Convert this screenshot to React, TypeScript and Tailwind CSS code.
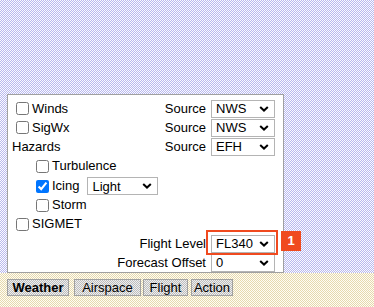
import { ReactNode } from 'react';

const Chevron = () => (
  <svg width="10" height="6" viewBox="0 0 10 6" className="shrink-0">
    <path d="M1.2 1 L5 4.6 L8.8 1" fill="none" stroke="#000" strokeWidth="2" />
  </svg>
);

const FakeSelect = ({ value, width = 'w-[64px]' }: { value: string; width?: string }) => (
  <div
    className={`${width} h-[18px] flex items-center justify-between border border-[#b4b4b4] bg-white pl-[4px] pr-[5px] leading-none`}
  >
    <span>{value}</span>
    <Chevron />
  </div>
);

const Check = ({ label, checked = false }: { label: string; checked?: boolean }) => (
  <label className="flex items-center">
    <input
      type="checkbox"
      defaultChecked={checked}
      className="w-[13px] h-[13px] ml-[4px] mr-[3px]"
    />
    <span>{label}</span>
  </label>
);

const SourceRow = ({ left, value, h = 'h-[19px]' }: { left: ReactNode; value: string; h?: string }) => (
  <div className={`${h} flex items-center justify-between`}>
    <div className="flex items-center">{left}</div>
    <div className="flex items-center gap-[5px]">
      <span>Source</span>
      <FakeSelect value={value} />
    </div>
  </div>
);

const tabs = [
  { name: 'Weather', w: 'w-[62px]', active: true },
  { name: 'Airspace', w: 'w-[67px] ml-[5px]' },
  { name: 'Flight', w: 'w-[45px] ml-[2px]' },
  { name: 'Action', w: 'w-[42px] ml-[3px]' },
];

export default function App() {
  return (
    <div className="w-[374px] h-[307px] overflow-hidden flex flex-col font-['Liberation_Sans',Arial,sans-serif] text-[13px] text-black">
      {/* map area */}
      <div className="h-[273px] bg-[#dcdcf6] bg-[image:repeating-conic-gradient(#b9b9ee_0%_25%,#fbfbff_0%_50%)] bg-[length:2px_2px] pt-[94px] pl-[7px]">
        <div className="relative w-[277px] h-[179px] border border-[#a0a0a0] bg-white pt-[4px] pl-[4px] pr-[8px]">
          <SourceRow left={<Check label="Winds" />} value="NWS" />
          <SourceRow left={<Check label="SigWx" />} value="NWS" />
          <SourceRow left={<span>Hazards</span>} value="EFH" />

          <div className="h-[20px] flex items-center pl-[20px]">
            <Check label="Turbulence" />
          </div>
          <div className="h-[20px] flex items-center pl-[20px]">
            <Check label="Icing" checked />
            <div className="ml-[8px]">
              <FakeSelect value="Light" width="w-[71px]" />
            </div>
          </div>
          <div className="h-[18px] flex items-center pl-[20px]">
            <Check label="Storm" />
          </div>
          <div className="h-[20px] flex items-center">
            <Check label="SIGMET" />
          </div>

          <div className="h-[19px] flex items-center justify-end gap-[5px]">
            <span>Flight Level</span>
            <div className="relative">
              <FakeSelect value="FL340" />
              <div className="absolute left-[-5px] right-[-3px] top-[-5px] bottom-[-2px] border-2 border-[#f04a1f]" />
              <div className="absolute left-[70px] top-[-4px] w-[20px] h-[20px] bg-[#f04a1f] text-white font-bold flex items-center justify-center">
                1
              </div>
            </div>
          </div>
          <div className="h-[19px] flex items-center justify-end gap-[5px]">
            <span>Forecast Offset</span>
            <FakeSelect value="0" />
          </div>
        </div>
      </div>

      {/* tab bar */}
      <div className="flex-1 bg-[#f4ecd2] bg-[image:repeating-conic-gradient(#e6d9ae_0%_25%,#fffdf4_0%_50%)] bg-[length:2px_2px] pt-[6px] pl-[7px] flex items-start">
        {tabs.map((t) => (
          <div
            key={t.name}
            className={`${t.w} h-[17px] flex items-center justify-center border border-[#a0a0a0] bg-[image:repeating-conic-gradient(#bdbdbd_0%_25%,#efefef_0%_50%)] bg-[length:2px_2px] leading-none ${t.active ? 'font-bold' : ''}`}
          >
            {t.name}
          </div>
        ))}
      </div>
    </div>
  );
}
